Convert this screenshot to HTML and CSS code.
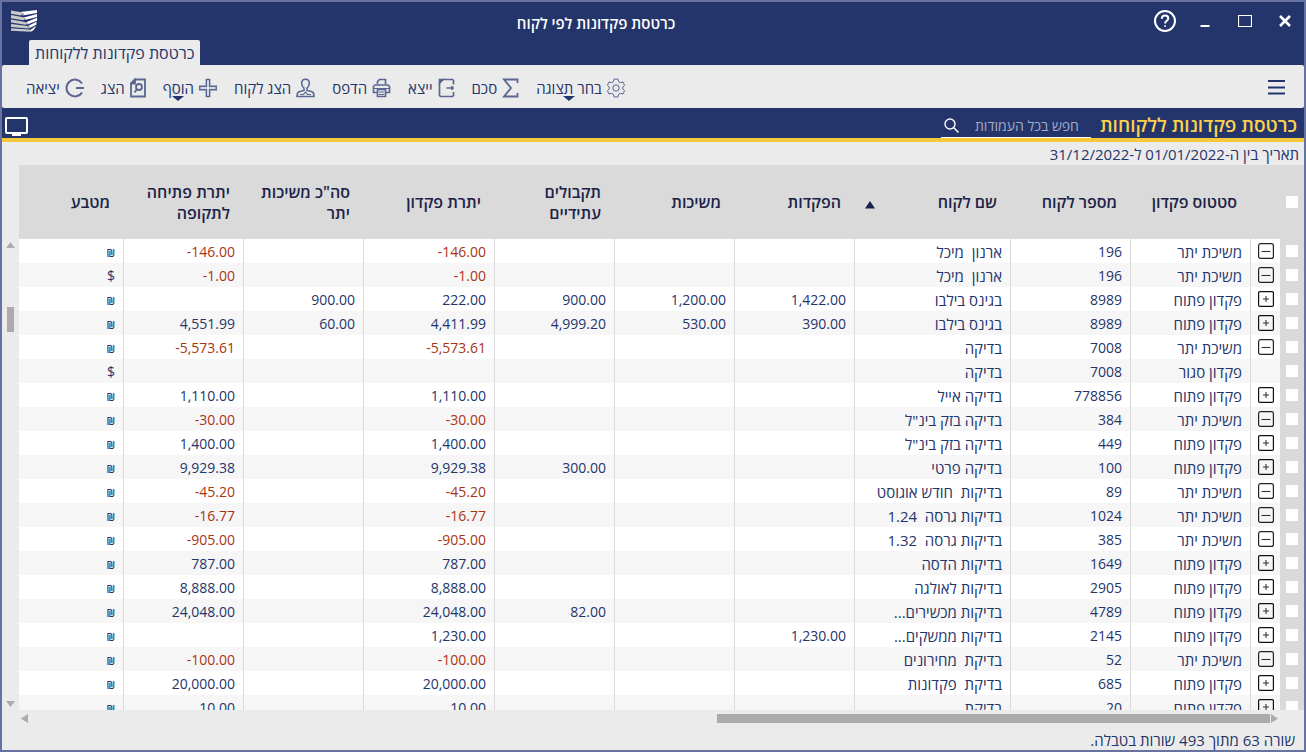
FILE: index.html
```
<!DOCTYPE html>
<html lang="he" dir="rtl">
<head>
<meta charset="utf-8">
<title>כרטסת פקדונות לפי לקוח</title>
<link rel="stylesheet" href="styles.css">
</head>
<body>

<svg class="defs" aria-hidden="true">
	<symbol id="plus" viewBox="0 0 16 16">
		<rect x="0.6" y="0.6" width="14.8" height="14.8" rx="1.2" fill="none" stroke="#111" stroke-width="1.2"/>
		<path d="M5 8h6M8 5v6" stroke="#333" stroke-width="1.1"/>
	</symbol>
	<symbol id="minus" viewBox="0 0 16 16">
		<rect x="0.6" y="0.6" width="14.8" height="14.8" rx="2" fill="none" stroke="#222" stroke-width="1.2"/>
		<path d="M3.5 8.5h9" stroke="#333" stroke-width="1.1"/>
	</symbol>
</svg>

<div class="window">

<header class="titlebar">
	<div class="controls">
		<button type="button" aria-label="סגור"><svg width="14" height="14" viewBox="0 0 14 14"><path d="M2 2l10 10M12 2L2 12" stroke="#fff" stroke-width="2.6"/></svg></button>
		<button type="button" aria-label="הגדל"><svg width="14" height="14" viewBox="0 0 14 14"><path d="M0.500 1.500h13v11h-13z" fill="none" stroke="#fff" stroke-width="1.2"/></svg></button>
		<button type="button" aria-label="מזער"><svg width="14" height="14" viewBox="0 0 14 14"><path d="M2.500 12h9" stroke="#fff" stroke-width="2"/></svg></button>
		<button type="button" aria-label="עזרה"><svg width="22" height="22" viewBox="0 0 22 22" fill="none" stroke="#fff"><circle cx="11" cy="11" r="10" stroke-width="2"/><path d="M7.800 8.800C7.800 6.600 9.200 5.500 11 5.500s3.300 1.200 3.300 2.900c0 2.300-3.200 2.600-3.200 5" stroke-width="2"/><circle cx="11.100" cy="16" r="0.600"/></svg></button>
	</div>
	<h1 class="caption">כרטסת פקדונות לפי לקוח</h1>
	<svg class="logo" width="26" height="22" viewBox="0 0 26 22">
		<g fill="#c9c9cb">
			<path d="M0 0.500L9 2l4 1.500-3.500 2L0 3.800zM0 5l11 2 4 1.500-3 1.700L0 8.300zM0 9.500l13 2.200 4 1.500-2.500 1.500L0 12.600zM0 14l15 1.700 4 1.300-2 1.600L0 17zM0 18.300l21 1.500-1 2L0 20.800z"/>
		</g>
		<g fill="#fff">
			<path d="M9 2l17-2v3L11.500 5.500 13 3.500zM12 7.800L26 4v3l-12.500 3L15 8.500zM15 12.200L26 7.800v3l-10.500 4L17 13.200zM17 16L25.500 11.800v2.800L18 18.600 19 17zM20 19.500l5-3.800-1.500 3.300-3 2.800z"/>
		</g>
	</svg>
</header>

<nav class="tabs"><a class="tab" href="#">כרטסת פקדונות ללקוחות</a></nav>

<div class="toolbar">
	<button type="button" class="menu" aria-label="תפריט"><svg width="17" height="16" viewBox="0 0 17 16"><path d="M0 2h17M0 8.500h17M0 14.500h17" stroke="#24356b" stroke-width="2"/></svg></button>
	<div class="actions">
		<button type="button" class="action has-menu">
			<svg width="18" height="20" viewBox="0 0 18 20"><path d="M7 1h4l.6 2.800 1.700 1L16 3.900l1.500 3.300L15.800 9v2l1.700 1.800-1.500 3.300-2.700-.9-1.700 1L11 19H7l-.6-2.800-1.700-1-2.700.9-1.500-3.300L2.200 11V9L.5 7.200 2 3.900l2.700.9 1.700-1z"/><circle cx="9" cy="10" r="3.200"/></svg>
			<span>בחר תצוגה</span>
		</button>
		<button type="button" class="action">
			<svg width="17" height="20" viewBox="0 0 17 20" stroke-width="1.800"><path d="M15.500 5V1.500H2L9 10l-7 8.500h13.500V15"/></svg>
			<span>סכם</span>
		</button>
		<button type="button" class="action">
			<svg width="17" height="20" viewBox="0 0 17 20" stroke-width="1.700"><path d="M15.500 6.500V2.500l-1-1H5L1.500 5v12.500l1 1h12l1-1V14M8.500 10H16M14 8v4"/><path d="M1.500 5V1.500H5z" fill="#24356b"/></svg>
			<span>ייצא</span>
		</button>
		<button type="button" class="action">
			<svg width="19" height="20" viewBox="0 0 19 20" stroke-width="1.700"><path d="M5.500 6V3.500l2-2h6V6M5 14.500H1.500v-6L3 7h13l1.500 1.500v6H14M5.500 11.500h8v7h-8z"/><path d="M7 14h5M7 16.500h5M2 10.500h15" stroke-width="1.200"/></svg>
			<span>הדפס</span>
		</button>
		<button type="button" class="action">
			<svg width="19" height="20" viewBox="0 0 19 20" stroke-width="1.600"><path d="M9.500 1.200C7 1.200 5.700 3 5.700 5.300c0 2 1 3.900 2.300 4.900v2.300l-5 1.300c-1.500.6-2 2-2 4.700h17c0-2.700-.5-4.100-2-4.700l-5-1.300v-2.300c1.300-1 2.300-2.900 2.300-4.900 0-2.300-1.300-4.100-3.800-4.100z"/><path d="M4 16.500h3.500l2-2.500 2 2.500H15" stroke-width="1.200"/></svg>
			<span>הצג לקוח</span>
		</button>
		<button type="button" class="action has-menu">
			<svg width="18" height="20" viewBox="0 0 18 20" stroke-width="1.400"><path d="M7.300 1.500h3.400v6.800h6.600v3.400h-6.600v6.800H7.300v-6.800H.7V8.300h6.600z" fill="#d5d8e2"/></svg>
			<span>הוסף</span>
		</button>
		<button type="button" class="action">
			<svg width="16" height="20" viewBox="0 0 16 20" stroke-width="1.800"><path d="M5 1.500h10v17H1V5.500z"/><path d="M1 5.500l4-4v4z" fill="#24356b"/><circle cx="9" cy="9" r="3"/><path d="M7 11L4.500 14.500"/></svg>
			<span>הצג</span>
		</button>
		<button type="button" class="action">
			<svg width="19" height="20" viewBox="0 0 19 20" stroke-width="2"><path d="M17 5.500A8.400 8.400 0 1 0 17 14.500M11 10h8"/></svg>
			<span>יציאה</span>
		</button>
	</div>
</div>

<div class="heading">
	<h2 class="heading-title">כרטסת פקדונות ללקוחות</h2>
	<div class="search">
		<input type="text" placeholder="חפש בכל העמודות" aria-label="חפש בכל העמודות">
		<svg width="15" height="15" viewBox="0 0 15 15" fill="none" stroke="#fff" stroke-width="1.400"><circle cx="6" cy="6" r="5"/><path d="M9.500 9.500l5 5"/></svg>
	</div>
	<svg class="monitor" width="23" height="19" viewBox="0 0 23 19"><rect x="1" y="1" width="21" height="15" rx="1" fill="none" stroke="#fff" stroke-width="2"/><path d="M7 17.500h9" stroke="#fff" stroke-width="3"/></svg>
</div>

<p class="period">תאריך בין ה-01/01/2022 ל-31/12/2022</p>

<main class="grid">
<div class="grid-view">
<table>
<colgroup>
	<col class="w-check"><col class="w-toggle"><col class="w-std"><col class="w-std"><col class="w-name"><col class="w-std"><col class="w-std"><col class="w-std"><col class="w-balance"><col class="w-std"><col class="w-std"><col>
</colgroup>
<thead>
<tr><th class="check"><input type="checkbox" aria-label="בחר הכל"></th><th></th><th>סטטוס פקדון</th><th>מספר לקוח</th><th><div class="sorted">שם לקוח <svg width="10" height="8" viewBox="0 0 10 8"><path d="M5 0l5 7.500H0z" fill="#1b2347"/></svg></div></th><th>הפקדות</th><th>משיכות</th><th>תקבולים עתידיים</th><th>יתרת פקדון</th><th>סה"כ משיכות יתר</th><th>יתרת פתיחה לתקופה</th><th>מטבע</th></tr>
</thead>
<tbody>
<tr><td class="check"><input type="checkbox" aria-label="בחר שורה"></td><td class="toggle"><button type="button" aria-label="כווץ"><svg><use href="#minus"/></svg></button></td><td>משיכת יתר</td><td class="num">196</td><td>ארנון  מיכל</td><td></td><td></td><td></td><td class="num neg">-146.00</td><td></td><td class="num neg">-146.00</td><td class="nis">₪</td></tr>
<tr><td class="check"><input type="checkbox" aria-label="בחר שורה"></td><td class="toggle"><button type="button" aria-label="כווץ"><svg><use href="#minus"/></svg></button></td><td>משיכת יתר</td><td class="num">196</td><td>ארנון  מיכל</td><td></td><td></td><td></td><td class="num neg">-1.00</td><td></td><td class="num neg">-1.00</td><td class="usd">$</td></tr>
<tr><td class="check"><input type="checkbox" aria-label="בחר שורה"></td><td class="toggle"><button type="button" aria-label="הרחב"><svg><use href="#plus"/></svg></button></td><td>פקדון פתוח</td><td class="num">8989</td><td>בגינס בילבו</td><td class="num">1,422.00</td><td class="num">1,200.00</td><td class="num">900.00</td><td class="num">222.00</td><td class="num">900.00</td><td></td><td class="nis">₪</td></tr>
<tr><td class="check"><input type="checkbox" aria-label="בחר שורה"></td><td class="toggle"><button type="button" aria-label="הרחב"><svg><use href="#plus"/></svg></button></td><td>פקדון פתוח</td><td class="num">8989</td><td>בגינס בילבו</td><td class="num">390.00</td><td class="num">530.00</td><td class="num">4,999.20</td><td class="num">4,411.99</td><td class="num">60.00</td><td class="num">4,551.99</td><td class="nis">₪</td></tr>
<tr><td class="check"><input type="checkbox" aria-label="בחר שורה"></td><td class="toggle"><button type="button" aria-label="כווץ"><svg><use href="#minus"/></svg></button></td><td>משיכת יתר</td><td class="num">7008</td><td>בדיקה</td><td></td><td></td><td></td><td class="num neg">-5,573.61</td><td></td><td class="num neg">-5,573.61</td><td class="nis">₪</td></tr>
<tr><td class="check"><input type="checkbox" aria-label="בחר שורה"></td><td class="toggle"></td><td>פקדון סגור</td><td class="num">7008</td><td>בדיקה</td><td></td><td></td><td></td><td></td><td></td><td></td><td class="usd">$</td></tr>
<tr><td class="check"><input type="checkbox" aria-label="בחר שורה"></td><td class="toggle"><button type="button" aria-label="הרחב"><svg><use href="#plus"/></svg></button></td><td>פקדון פתוח</td><td class="num">778856</td><td>בדיקה אייל</td><td></td><td></td><td></td><td class="num">1,110.00</td><td></td><td class="num">1,110.00</td><td class="nis">₪</td></tr>
<tr><td class="check"><input type="checkbox" aria-label="בחר שורה"></td><td class="toggle"><button type="button" aria-label="כווץ"><svg><use href="#minus"/></svg></button></td><td>משיכת יתר</td><td class="num">384</td><td>בדיקה בזק בינ"ל</td><td></td><td></td><td></td><td class="num neg">-30.00</td><td></td><td class="num neg">-30.00</td><td class="nis">₪</td></tr>
<tr><td class="check"><input type="checkbox" aria-label="בחר שורה"></td><td class="toggle"><button type="button" aria-label="הרחב"><svg><use href="#plus"/></svg></button></td><td>פקדון פתוח</td><td class="num">449</td><td>בדיקה בזק בינ"ל</td><td></td><td></td><td></td><td class="num">1,400.00</td><td></td><td class="num">1,400.00</td><td class="nis">₪</td></tr>
<tr><td class="check"><input type="checkbox" aria-label="בחר שורה"></td><td class="toggle"><button type="button" aria-label="הרחב"><svg><use href="#plus"/></svg></button></td><td>פקדון פתוח</td><td class="num">100</td><td>בדיקה פרטי</td><td></td><td></td><td class="num">300.00</td><td class="num">9,929.38</td><td></td><td class="num">9,929.38</td><td class="nis">₪</td></tr>
<tr><td class="check"><input type="checkbox" aria-label="בחר שורה"></td><td class="toggle"><button type="button" aria-label="כווץ"><svg><use href="#minus"/></svg></button></td><td>משיכת יתר</td><td class="num">89</td><td>בדיקות  חודש אוגוסט</td><td></td><td></td><td></td><td class="num neg">-45.20</td><td></td><td class="num neg">-45.20</td><td class="nis">₪</td></tr>
<tr><td class="check"><input type="checkbox" aria-label="בחר שורה"></td><td class="toggle"><button type="button" aria-label="כווץ"><svg><use href="#minus"/></svg></button></td><td>משיכת יתר</td><td class="num">1024</td><td>בדיקות גרסה  1.24</td><td></td><td></td><td></td><td class="num neg">-16.77</td><td></td><td class="num neg">-16.77</td><td class="nis">₪</td></tr>
<tr><td class="check"><input type="checkbox" aria-label="בחר שורה"></td><td class="toggle"><button type="button" aria-label="כווץ"><svg><use href="#minus"/></svg></button></td><td>משיכת יתר</td><td class="num">385</td><td>בדיקות גרסה  1.32</td><td></td><td></td><td></td><td class="num neg">-905.00</td><td></td><td class="num neg">-905.00</td><td class="nis">₪</td></tr>
<tr><td class="check"><input type="checkbox" aria-label="בחר שורה"></td><td class="toggle"><button type="button" aria-label="הרחב"><svg><use href="#plus"/></svg></button></td><td>פקדון פתוח</td><td class="num">1649</td><td>בדיקות הדסה</td><td></td><td></td><td></td><td class="num">787.00</td><td></td><td class="num">787.00</td><td class="nis">₪</td></tr>
<tr><td class="check"><input type="checkbox" aria-label="בחר שורה"></td><td class="toggle"><button type="button" aria-label="הרחב"><svg><use href="#plus"/></svg></button></td><td>פקדון פתוח</td><td class="num">2905</td><td>בדיקות לאולגה</td><td></td><td></td><td></td><td class="num">8,888.00</td><td></td><td class="num">8,888.00</td><td class="nis">₪</td></tr>
<tr><td class="check"><input type="checkbox" aria-label="בחר שורה"></td><td class="toggle"><button type="button" aria-label="הרחב"><svg><use href="#plus"/></svg></button></td><td>פקדון פתוח</td><td class="num">4789</td><td>בדיקות מכשירים...</td><td></td><td></td><td class="num">82.00</td><td class="num">24,048.00</td><td></td><td class="num">24,048.00</td><td class="nis">₪</td></tr>
<tr><td class="check"><input type="checkbox" aria-label="בחר שורה"></td><td class="toggle"><button type="button" aria-label="הרחב"><svg><use href="#plus"/></svg></button></td><td>פקדון פתוח</td><td class="num">2145</td><td>בדיקות ממשקים...</td><td class="num">1,230.00</td><td></td><td></td><td class="num">1,230.00</td><td></td><td></td><td class="nis">₪</td></tr>
<tr><td class="check"><input type="checkbox" aria-label="בחר שורה"></td><td class="toggle"><button type="button" aria-label="כווץ"><svg><use href="#minus"/></svg></button></td><td>משיכת יתר</td><td class="num">52</td><td>בדיקת  מחירונים</td><td></td><td></td><td></td><td class="num neg">-100.00</td><td></td><td class="num neg">-100.00</td><td class="nis">₪</td></tr>
<tr><td class="check"><input type="checkbox" aria-label="בחר שורה"></td><td class="toggle"><button type="button" aria-label="הרחב"><svg><use href="#plus"/></svg></button></td><td>פקדון פתוח</td><td class="num">685</td><td>בדיקת  פקדונות</td><td></td><td></td><td></td><td class="num">20,000.00</td><td></td><td class="num">20,000.00</td><td class="nis">₪</td></tr>
<tr><td class="check"><input type="checkbox" aria-label="בחר שורה"></td><td class="toggle"><button type="button" aria-label="הרחב"><svg><use href="#plus"/></svg></button></td><td>פקדון פתוח</td><td class="num">20</td><td>בדיקת</td><td></td><td></td><td></td><td class="num">10.00</td><td></td><td class="num">10.00</td><td class="nis">₪</td></tr>
</tbody>
</table>
</div>
<div class="vscroll">
	<svg width="9" height="6" viewBox="0 0 9 6"><path d="M4.500 0L9 6H0z"/></svg>
	<div class="vtrack"><div class="vthumb"></div></div>
	<svg width="9" height="6" viewBox="0 0 9 6"><path d="M4.500 6L9 0H0z"/></svg>
</div>
</main>

<div class="hscroll">
	<svg width="7" height="9" viewBox="0 0 7 9"><path d="M7 4.500L0 9V0z"/></svg>
	<div class="htrack"><div class="hthumb"></div></div>
	<svg width="7" height="9" viewBox="0 0 7 9"><path d="M0 4.500L7 9V0z"/></svg>
</div>

<footer class="status">שורה 63 מתוך 493 שורות בטבלה.</footer>

</div>

</body>
</html>
```

FILE: styles.css
```
* {
	box-sizing: border-box;
}
body {
	margin: 0;
	font-family: "Open Sans", "Noto Sans", sans-serif;
	font-size: 15px;
	color: #24356b;
}
button, input {
	font: inherit;
	color: inherit;
	margin: 0;
	padding: 0;
	border: 0;
	background: none;
}
svg {
	display: block;
	flex: none;
}
.defs {
	display: none;
}
.window {
	display: flex;
	flex-direction: column;
	height: 100vh;
	border: 2px solid #6872a0;
	background: #24356b;
	overflow: hidden;
}

/* title bar */
.titlebar {
	display: flex;
	align-items: center;
	height: 38px;
	flex: none;
}
.controls {
	display: flex;
	gap: 2px;
}
.controls button {
	display: flex;
	align-items: center;
	justify-content: center;
	width: 38px;
	height: 38px;
}
.caption {
	flex: 1;
	margin: 0;
	padding-top: 4px;
	font-size: 15px;
	line-height: 20px;
	font-weight: 600;
	text-align: center;
	color: #fff;
}
.logo {
	margin: 0 9px;
}
.tabs {
	display: flex;
	justify-content: flex-end;
	padding-left: 27px;
	flex: none;
}
.tab {
	padding: 2px 6px 0;
	border-radius: 2px 2px 0 0;
	background: #ebebeb;
	color: #24356b;
	font-size: 16px;
	font-weight: 500;
	line-height: 23px;
	text-decoration: none;
}

/* toolbar */
.toolbar {
	display: flex;
	justify-content: space-between;
	align-items: center;
	flex: none;
	height: 43px;
	padding: 0 19px 0 24px;
	border-radius: 2px;
	background: #ebebeb;
}
.actions {
	display: flex;
	gap: 17px;
}
.action {
	display: flex;
	align-items: center;
	gap: 5px;
	position: relative;
	padding-top: 2px;
	line-height: 20px;
}
.action svg {
	fill: none;
	stroke: #5a6792;
}
.has-menu::after {
	content: "";
	position: absolute;
	left: 50%;
	top: 20px;
	margin-left: -18px;
	border: 6px solid transparent;
	border-top: 5px solid #24356b;
	border-bottom: 0;
}

/* heading bar */
.heading {
	display: flex;
	align-items: flex-end;
	flex: none;
	height: 34px;
	padding: 0 7px 0 3px;
	border-bottom: 4px solid #f5c93b;
}
.heading-title {
	margin: 0 0 0 9px;
	font-size: 19px;
	line-height: 26px;
	font-weight: 600;
	color: #fbd24d;
}
.search {
	display: flex;
	align-items: center;
	width: 150px;
	height: 24px;
	padding: 0 12px 0 3px;
	border-bottom: 1px solid #fff;
}
.search input {
	flex: 1;
	min-width: 0;
	outline: 0;
	font-size: 14px;
}
.search input::placeholder {
	color: #a3abc6;
	opacity: 1;
}
.monitor {
	margin: 0 auto 2px 0;
}
.period {
	flex: none;
	margin: 0;
	padding: 2px 5px 0;
	height: 23px;
	line-height: 21px;
	background: #ebebeb;
}

/* table */
.grid {
	display: flex;
	flex: 1;
	min-height: 0;
	background: #ebebeb;
}
.grid-view {
	flex: 1;
	min-width: 0;
	overflow: hidden;
}
table {
	width: 100%;
	table-layout: fixed;
	border-collapse: separate;
	border-spacing: 0;
}
.w-check {
	width: 24px;
}
.w-toggle {
	width: 30px;
}
.w-std {
	width: 120px;
}
.w-name {
	width: 156px;
}
.w-balance {
	width: 131px;
}
th {
	height: 74px;
	padding: 1px 13px 0 8px;
	background: #dadada;
	color: #1b2347;
	font-size: 16px;
	line-height: 21px;
	font-weight: 600;
	text-align: right;
}
.sorted {
	display: flex;
	align-items: center;
	justify-content: space-between;
	padding-left: 3px;
}
.sorted svg {
	margin-top: 4px;
}
td {
	height: 24px;
	padding: 2px 8px 0;
	border-left: 1px solid #dadada;
	background: #fff;
	line-height: 20px;
	white-space: pre;
	text-align: right;
}
td:last-child {
	border-left: 0;
}
tr:nth-child(even) td {
	background: #f6f6f6;
}
.num {
	padding-right: 7px;
	direction: ltr;
	font-size: 14px;
}
.neg {
	color: #a93414;
}
.nis {
	padding-top: 4px;
	font-size: 10px;
	font-weight: 600;
}
.usd {
	font-size: 14px;
}
.check, tr:nth-child(even) .check {
	padding: 0 6px;
	border: 0;
	background: #dadada;
}
.check input {
	display: block;
	appearance: none;
	width: 12px;
	height: 12px;
	background: #fff;
}
.check input:checked {
	background: #24356b;
}
.toggle {
	padding: 0 6px;
}
.toggle button, .toggle svg {
	display: block;
	width: 16px;
	height: 16px;
}

/* scroll bars */
.vscroll {
	display: flex;
	flex-direction: column;
	align-items: center;
	width: 17px;
	padding: 77px 0 3px;
}
.vscroll svg, .hscroll svg {
	fill: #acacac;
}
.vtrack {
	flex: 1;
	width: 7px;
	padding-top: 59px;
}
.vthumb {
	height: 25px;
	background: #acaaaa;
}
.hscroll {
	display: flex;
	align-items: center;
	gap: 1px;
	flex: none;
	height: 18px;
	padding: 0 26px 1px 19px;
	background: #ebebeb;
}
.htrack {
	flex: 1;
}
.hthumb {
	width: 44.6%;
	height: 9px;
	background: #acaaaa;
}
.status {
	flex: none;
	height: 22px;
	padding: 0 9px;
	line-height: 24px;
	background: #ebebeb;
}
```
